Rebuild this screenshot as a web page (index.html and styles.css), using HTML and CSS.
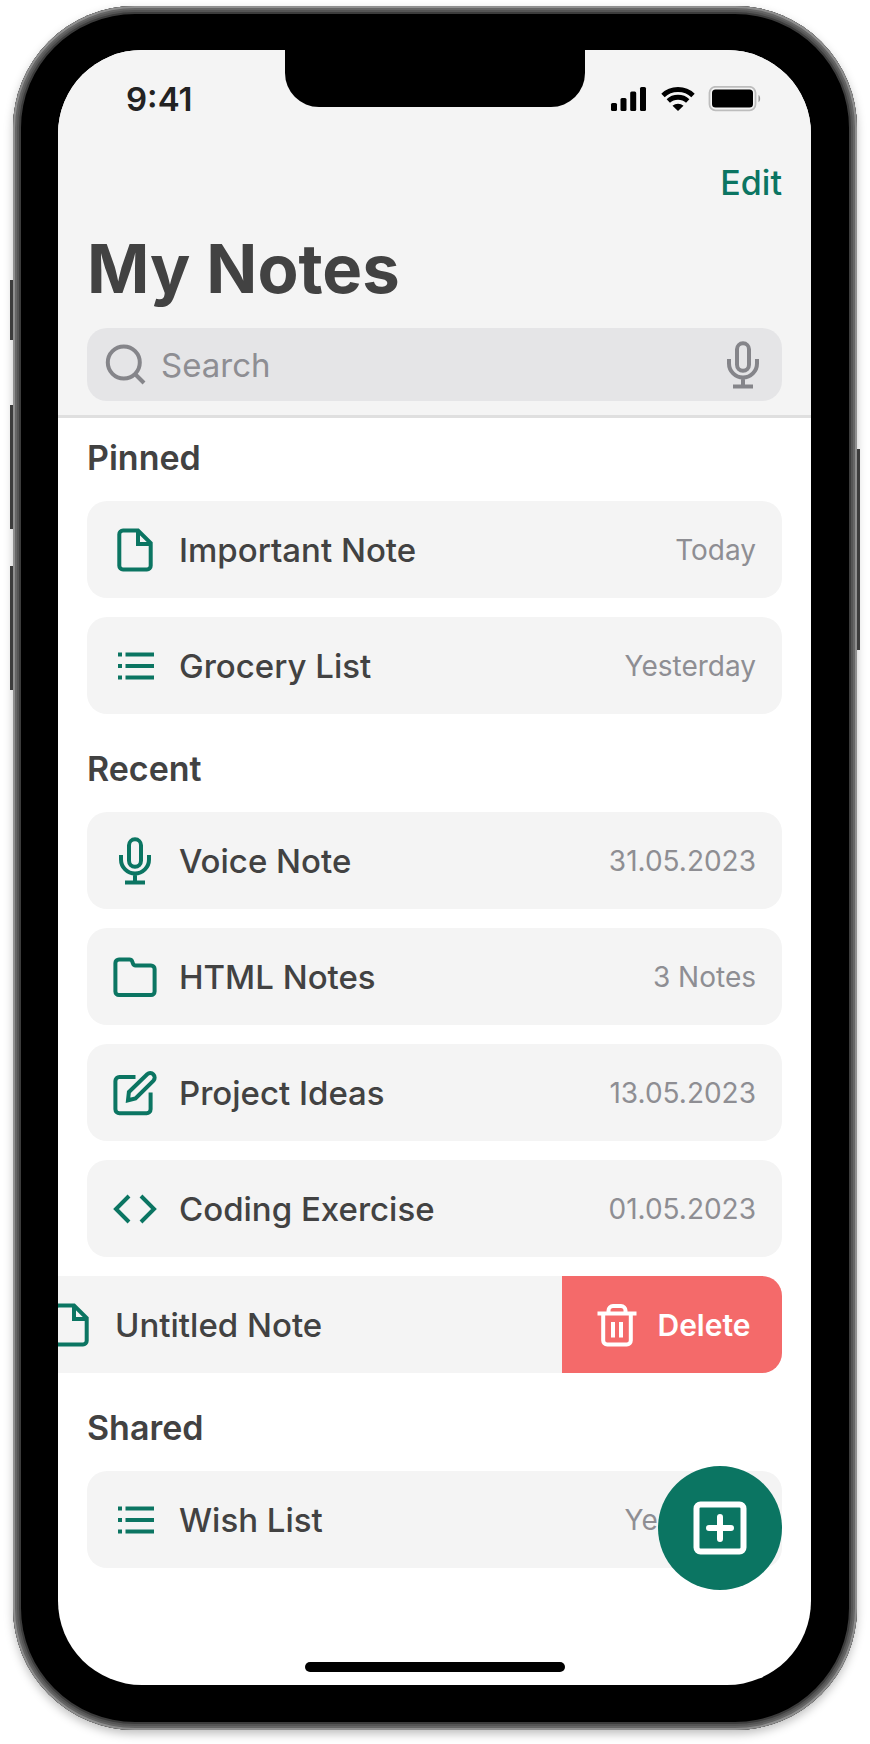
FILE: index.html
```html
<!DOCTYPE html>
<html lang="en">
<head>
<meta charset="utf-8">
<meta name="viewport" content="width=device-width, initial-scale=1">
<title>My Notes</title>
<link rel="stylesheet" href="styles.css">
</head>
<body>
<svg class="sprite" aria-hidden="true">
  <symbol id="file" viewBox="0 0 48 48"><path d="M27 4.500H12a3.700 3.700 0 0 0-3.700 3.700v31.600a3.700 3.700 0 0 0 3.700 3.700h24a3.700 3.700 0 0 0 3.700-3.700V17z"/><path d="M27 4.500V18h12.500"/></symbol>
  <symbol id="list" viewBox="0 0 48 48"><path d="M7 12.400h4M7 24h4M7 35.600h4M14.500 12.400H43M14.500 24H43M14.500 35.600H43"/></symbol>
  <symbol id="mic" viewBox="0 0 48 48"><rect x="18" y="2.300" width="12" height="27.500" rx="6"/><path d="M10 18v4.500a14 14 0 0 0 28 0V18M24 36.500v9M14 45.600h20"/></symbol>
  <symbol id="folder" viewBox="0 0 48 48"><path d="M4.400 38.500V10a3.600 3.600 0 0 1 3.600-3.600h10.500c1.500 0 2.200.600 2.600 1.700l.8 2.300c.4 1.200 1.200 2 2.600 2H40a3.600 3.600 0 0 1 3.600 3.600v22.500a3.600 3.600 0 0 1-3.600 3.600H8a3.600 3.600 0 0 1-3.600-3.600z"/></symbol>
  <symbol id="compose" viewBox="0 0 48 48"><path d="M24.500 8H8.400a4 4 0 0 0-4 4v28.200a4 4 0 0 0 4 4h27.200a4 4 0 0 0 4-4V23.500"/><path d="M17 31.300l.9-8.300L36.200 5.200a4.500 4.500 0 0 1 6.300 6.400L24.500 29.500z"/></symbol>
  <symbol id="code" viewBox="0 0 48 48"><path d="M18 11L5 24l13 13M30 11l13 13-13 13"/></symbol>
  <symbol id="trash" viewBox="0 0 48 48"><path d="M4.500 12.600h39M15.500 12.600V9.500a4.500 4.500 0 0 1 4.500-4.500h8a4.500 4.500 0 0 1 4.500 4.500v3.100M10.200 12.600v27a4 4 0 0 0 4 4h19.600a4 4 0 0 0 4-4v-27M20 21v15.500M28 21v15.500"/></symbol>
</svg>

<div class="phone">
  <span class="key key-mute"></span><span class="key key-up"></span><span class="key key-down"></span><span class="key key-power"></span>
  <div class="screen">
    <div class="notch"></div>
    <header class="header">
      <div class="status">
        <span class="time">9:41</span>
        <svg class="status-icons" width="152" height="26" viewBox="0 0 152 26" aria-hidden="true">
          <rect x="1" y="17" width="6" height="8" rx="1.500"/><rect x="10.500" y="12" width="6" height="13" rx="1.500"/><rect x="20.200" y="5.500" width="6" height="19.500" rx="1.500"/><rect x="30" y="1" width="6" height="24" rx="1.500"/>
          <path d="M53 9.500C61 1.500 75 1.500 83 9.500M58.300 15C63.500 10 72.500 10 77.700 15" fill="none" stroke="#000" stroke-width="4.800"/>
          <path d="M62.500 19.800c3-2.800 8-2.800 11 0L68 25z"/>
          <rect x="99.500" y=".8" width="46" height="23.500" rx="6" fill="none" stroke="#bdbdbd" stroke-width="1.800"/><rect x="102" y="3.500" width="41" height="18" rx="3.500"/><path d="M148.500 9c2.200 1.200 2.200 6 0 7.200z" fill="#999"/>
        </svg>
      </div>
      <div class="toolbar"><button class="edit" type="button">Edit</button></div>
      <h1 class="title">My Notes</h1>
      <div class="search">
        <svg class="search-icon" width="48" height="48" viewBox="0 0 48 48" aria-hidden="true"><circle cx="21.800" cy="21.500" r="16"/><path d="M33.500 33.500l8.500 8.500"/></svg>
        <input class="search-input" type="search" placeholder="Search" aria-label="Search">
        <button class="dictate" type="button" aria-label="Dictate"><svg class="icon"><use href="#mic"/></svg></button>
      </div>
    </header>

    <main class="content">
      <section class="group">
        <h2 class="heading">Pinned</h2>
        <ul class="notes">
          <li class="note"><svg class="icon"><use href="#file"/></svg><span class="name">Important Note</span><span class="meta">Today</span></li>
          <li class="note"><svg class="icon"><use href="#list"/></svg><span class="name">Grocery List</span><span class="meta">Yesterday</span></li>
        </ul>
      </section>
      <section class="group">
        <h2 class="heading">Recent</h2>
        <ul class="notes">
          <li class="note"><svg class="icon"><use href="#mic"/></svg><span class="name">Voice Note</span><span class="meta">31.05.2023</span></li>
          <li class="note"><svg class="icon"><use href="#folder"/></svg><span class="name">HTML Notes</span><span class="meta">3 Notes</span></li>
          <li class="note"><svg class="icon"><use href="#compose"/></svg><span class="name">Project Ideas</span><span class="meta">13.05.2023</span></li>
          <li class="note"><svg class="icon"><use href="#code"/></svg><span class="name">Coding Exercise</span><span class="meta">01.05.2023</span></li>
          <li class="note swiped"><svg class="icon"><use href="#file"/></svg><span class="name">Untitled Note</span><button class="delete" type="button"><svg class="icon"><use href="#trash"/></svg>Delete</button></li>
        </ul>
      </section>
      <section class="group">
        <h2 class="heading">Shared</h2>
        <ul class="notes">
          <li class="note"><svg class="icon"><use href="#list"/></svg><span class="name">Wish List</span><span class="meta">Yesterday</span></li>
        </ul>
      </section>
    </main>

    <div class="home"></div>
    <button class="add" type="button" aria-label="New note"><svg width="54" height="54" viewBox="0 0 54 54" aria-hidden="true"><rect x="3.500" y="3.500" width="47" height="47" rx="4"/><path d="M27 16v22M16 27h22"/></svg></button>
  </div>
</div>
</body>
</html>
```

FILE: styles.css
```css
:root {
  --green: #0b7562;
  --ink: #424242;
  --muted: #8e8e93;
  --surface: #f4f4f4;
  --gutter: 29px;
}

* { box-sizing: border-box; }

body {
  margin: 0;
  padding: 6px 13px 14px;
  background: #fff;
  color: var(--ink);
  font-family: Inter, "Liberation Sans", sans-serif;
}

button {
  padding: 0;
  border: 0;
  background: none;
  font-family: inherit;
  cursor: pointer;
}

.sprite {
  position: absolute;
  width: 0;
  height: 0;
}

.phone {
  position: relative;
  padding: 44px 46px 45px 45px;
  border-radius: 122px;
  background: #000;
  box-shadow:
    inset 0 0 0 2px #8f8f8f,
    inset 0 0 0 4px #666,
    inset 0 0 0 6px #555,
    inset 0 0 0 8px #3c3c3c,
    0 4px 10px rgba(0, 0, 0, 0.25);
}

.key {
  position: absolute;
  left: -3px;
  width: 3px;
  height: 124px;
  background: #3c3c3c;
}

.key-mute { top: 274px; height: 60px; }
.key-up { top: 399px; }
.key-down { top: 560px; }
.key-power { top: 443px; right: -3px; left: auto; height: 201px; }

.screen {
  position: relative;
  overflow: hidden;
  border-radius: 84px;
  background: #fff;
}

.notch {
  position: absolute;
  top: 0;
  left: 50%;
  width: 300px;
  height: 57px;
  border-radius: 0 0 34px 34px;
  background: #000;
  transform: translateX(-50%);
}

.header {
  padding: 28px var(--gutter) 14px;
  border-bottom: 3px solid #dfdfdf;
  background: var(--surface);
}

.status {
  display: flex;
  align-items: center;
  justify-content: space-between;
  height: 42px;
  padding: 0 20px 0 39px;
}

.time {
  color: #222;
  font-size: 33px;
  font-weight: 600;
}

.toolbar {
  display: flex;
  justify-content: flex-end;
  padding-top: 43px;
}

.edit {
  color: var(--green);
  font-size: 34px;
  font-weight: 500;
  line-height: 40px;
}

.title {
  margin: 25px 0 18px;
  font-size: 67px;
  font-weight: 700;
  line-height: 82px;
}

.search {
  display: flex;
  align-items: center;
  height: 73px;
  padding: 0 15px;
  border-radius: 20px;
  background: #e5e5e7;
  color: var(--muted);
}

.search-icon {
  flex: none;
  fill: none;
  stroke: #85858a;
  stroke-width: 4;
}

.search-input {
  flex: 1;
  min-width: 0;
  padding: 0 11px;
  border: 0;
  outline: 0;
  background: none;
  color: var(--ink);
  font-family: inherit;
  font-size: 33px;
}

.search-input::placeholder { color: var(--muted); }

.dictate { color: #85858a; line-height: 0; }

.icon {
  flex: none;
  width: 48px;
  height: 48px;
  fill: none;
  stroke: currentColor;
  stroke-width: 4;
}

.content { padding: 0 var(--gutter); }

.heading {
  margin: 0;
  padding: 20px 0 23px;
  font-size: 34px;
  font-weight: 600;
  line-height: 40px;
}

.group + .group .heading { padding-top: 35px; }

.notes {
  display: grid;
  gap: 19px;
  margin: 0;
  padding: 0;
  list-style: none;
}

.note {
  display: flex;
  align-items: center;
  gap: 20px;
  height: 97px;
  padding: 0 26px 0 24px;
  border-radius: 20px;
  background: var(--surface);
}

.note > .icon { color: var(--green); }

.name {
  flex: 1;
  font-size: 33px;
  font-weight: 500;
}

.meta {
  color: var(--muted);
  font-size: 28px;
}

.swiped {
  margin-left: -64px;
  padding-right: 0;
}

.delete {
  display: flex;
  align-items: center;
  justify-content: center;
  gap: 16px;
  width: 220px;
  height: 100%;
  border-radius: 0 20px 20px 0;
  background: #f46a6a;
  color: #fff;
  font-size: 30px;
  font-weight: 600;
}

.home {
  width: 260px;
  height: 10px;
  margin: 94px auto 13px;
  border-radius: 5px;
  background: #000;
}

.add {
  position: absolute;
  right: var(--gutter);
  bottom: 95px;
  display: grid;
  place-items: center;
  width: 124px;
  height: 124px;
  border-radius: 50%;
  background: var(--green);
  fill: none;
  stroke: #fff;
  stroke-linecap: round;
  stroke-width: 6;
}
```
